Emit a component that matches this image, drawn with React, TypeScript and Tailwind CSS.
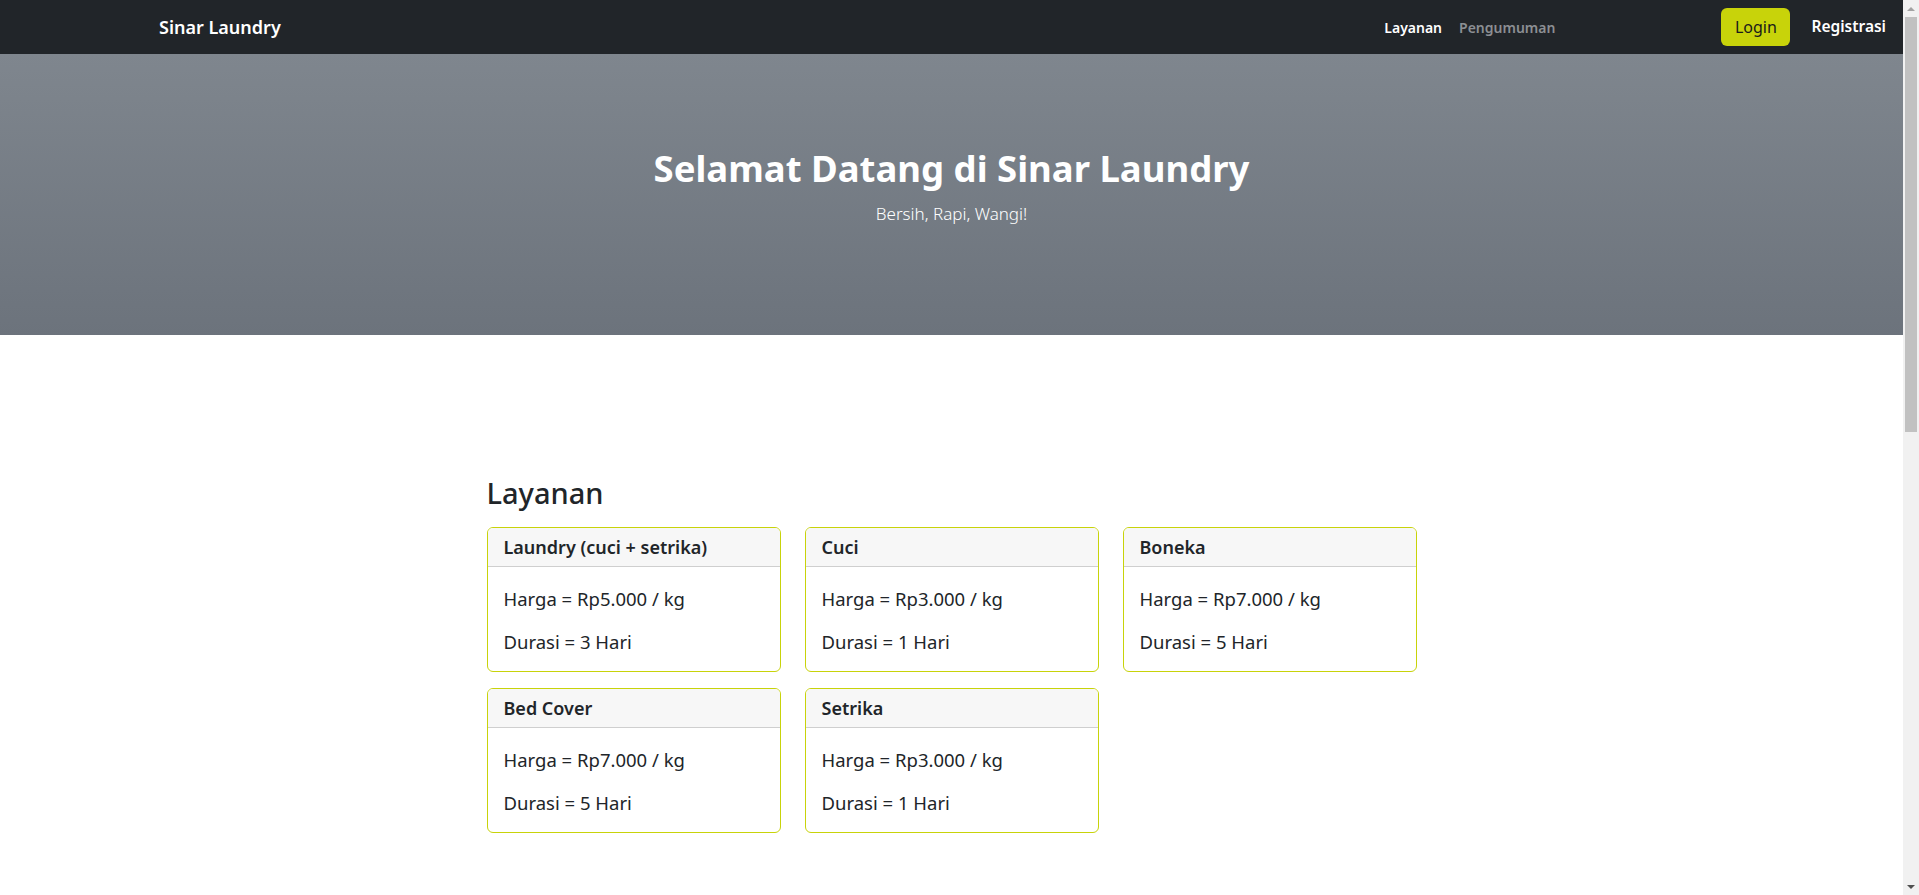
import React from "react";

const services = [
  { name: "Laundry (cuci + setrika)", harga: "Rp5.000", durasi: "3 Hari" },
  { name: "Cuci", harga: "Rp3.000", durasi: "1 Hari" },
  { name: "Boneka", harga: "Rp7.000", durasi: "5 Hari" },
  { name: "Bed Cover", harga: "Rp7.000", durasi: "5 Hari" },
  { name: "Setrika", harga: "Rp3.000", durasi: "1 Hari" },
];

function Scrollbar() {
  return (
    <div className="w-[16px] h-full bg-[#f1f1f1] flex flex-col items-center shrink-0">
      <div className="h-[17px] w-full flex items-center justify-center">
        <div className="w-0 h-0 border-l-[4px] border-r-[4px] border-b-[4px] border-l-transparent border-r-transparent border-b-[#a3a3a3]" />
      </div>
      <div className="w-[12px] h-[415px] bg-[#c1c1c1]" />
      <div className="flex-1" />
      <div className="h-[17px] w-full flex items-center justify-center">
        <div className="w-0 h-0 border-l-[4px] border-r-[4px] border-t-[4px] border-l-transparent border-r-transparent border-t-[#505050]" />
      </div>
    </div>
  );
}

export default function App() {
  return (
    <div
      className="flex h-[895px] overflow-hidden bg-white text-[#212529]"
      style={{ fontFamily: '"Noto Sans", "Open Sans", sans-serif' }}
    >
      <div className="flex-1 min-w-0">
        <nav className="h-[54px] bg-[#212529] flex items-center pl-[159px] pr-[17px]">
          <a className="text-white text-[18px] font-semibold leading-[27px]">Sinar Laundry</a>
          <div className="ml-auto flex items-center gap-[17px] text-[14px] font-semibold">
            <a className="text-white">Layanan</a>
            <a className="text-[#8c8f93]">Pengumuman</a>
          </div>
          <div className="ml-[166px] flex items-center gap-[21px]">
            <button className="w-[69px] h-[38px] rounded-[6px] bg-[#c8d30a] text-[#1a1a1a] text-[16px]">
              Login
            </button>
            <a className="text-white text-[15.5px] font-semibold">Registrasi</a>
          </div>
        </nav>

        <header className="h-[281px] bg-gradient-to-b from-[#7f868e] to-[#6c737c] pt-[93px] text-center text-white">
          <h1 className="text-[36.5px] font-bold leading-[43px] mb-[11px]">Selamat Datang di Sinar Laundry</h1>
          <p className="text-[17px] font-light leading-[26px]">Bersih, Rapi, Wangi!</p>
        </header>

        <section className="w-[930px] mx-auto pt-[140px]">
          <h2 className="text-[29px] font-medium leading-[35px] mb-[17px]">Layanan</h2>
          <div className="grid grid-cols-3 gap-x-[24px] gap-y-[16px]">
            {services.map((s) => (
              <div key={s.name} className="rounded-[6px] border border-[#c8d30a] overflow-hidden">
                <div className="bg-[#f7f7f7] border-b border-[#cfcfcf] px-4 py-2 text-[18px] font-semibold leading-[22px]">
                  {s.name}
                </div>
                <div className="px-4 pt-[18px] pb-4 text-[18.5px] leading-[27px]">
                  <p className="mb-4">Harga = {s.harga} / kg</p>
                  <p>Durasi = {s.durasi}</p>
                </div>
              </div>
            ))}
          </div>
        </section>
      </div>
      <Scrollbar />
    </div>
  );
}
